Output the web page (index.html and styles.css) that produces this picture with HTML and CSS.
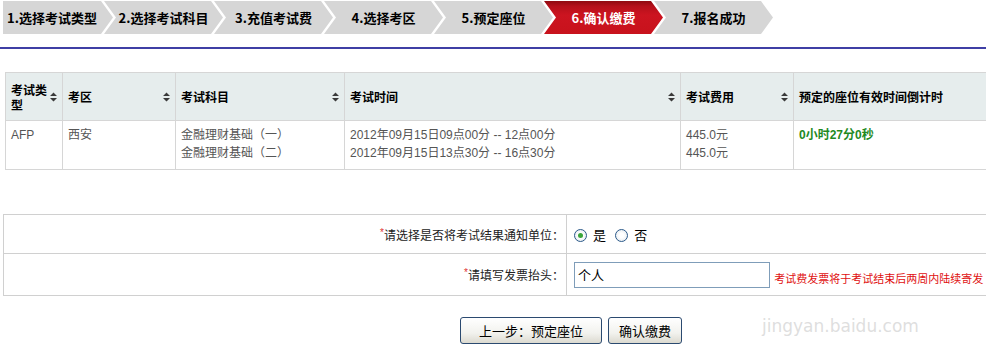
FILE: index.html
```html
<!DOCTYPE html>
<html lang="zh-CN">
<head>
    <meta charset="UTF-8">
    <title>确认缴费</title>
    <link rel="stylesheet" href="styles.css">
</head>
<body>
    <div class="steps">
        <div class="step first">1.选择考试类型</div>
        <div class="step">2.选择考试科目</div>
        <div class="step">3.充值考试费</div>
        <div class="step">4.选择考区</div>
        <div class="step">5.预定座位</div>
        <div class="step active">6.确认缴费</div>
        <div class="step">7.报名成功</div>
    </div>
    <div class="rule"></div>

    <table class="list">
        <thead>
            <tr>
                <th class="c1"><div class="th-in"><span>考试类型</span><svg class="sort" viewBox="0 0 7 10"><path d="M3.5 0.5 L7 4 L0 4 Z M0 6 L7 6 L3.5 9.5 Z"/></svg></div></th>
                <th class="c2"><div class="th-in"><span>考区</span><svg class="sort" viewBox="0 0 7 10"><path d="M3.5 0.5 L7 4 L0 4 Z M0 6 L7 6 L3.5 9.5 Z"/></svg></div></th>
                <th class="c3"><div class="th-in"><span>考试科目</span><svg class="sort" viewBox="0 0 7 10"><path d="M3.5 0.5 L7 4 L0 4 Z M0 6 L7 6 L3.5 9.5 Z"/></svg></div></th>
                <th class="c4"><div class="th-in"><span>考试时间</span><svg class="sort" viewBox="0 0 7 10"><path d="M3.5 0.5 L7 4 L0 4 Z M0 6 L7 6 L3.5 9.5 Z"/></svg></div></th>
                <th class="c5"><div class="th-in"><span>考试费用</span><svg class="sort" viewBox="0 0 7 10"><path d="M3.5 0.5 L7 4 L0 4 Z M0 6 L7 6 L3.5 9.5 Z"/></svg></div></th>
                <th class="c6"><div class="th-in"><span>预定的座位有效时间倒计时</span></div></th>
            </tr>
        </thead>
        <tbody>
            <tr>
                <td>AFP</td>
                <td>西安</td>
                <td>金融理财基础（一）<br>金融理财基础（二）</td>
                <td>2012年09月15日09点00分 -- 12点00分<br>2012年09月15日13点30分 -- 16点30分</td>
                <td>445.0元<br>445.0元</td>
                <td class="countdown">0小时27分0秒</td>
            </tr>
        </tbody>
    </table>

    <table class="form">
        <tr class="r1">
            <td class="label"><em>*</em>请选择是否将考试结果通知单位：</td>
            <td class="field">
                <span class="radio checked"></span><span class="opt">是</span>
                <span class="radio"></span><span class="opt">否</span>
            </td>
        </tr>
        <tr class="r2">
            <td class="label"><em>*</em>请填写发票抬头：</td>
            <td class="field">
                <input type="text" class="title-input" value="个人">
                <span class="note">考试费发票将于考试结束后两周内陆续寄发</span>
            </td>
        </tr>
    </table>

    <div class="actions">
        <button class="btn">上一步：预定座位</button>
        <button class="btn">确认缴费</button>
    </div>

    <div class="watermark">jingyan.baidu.com</div>
</body>
</html>
```

FILE: styles.css
```css
html, body {
    overflow: hidden;
}

body {
    margin: 0;
    width: 986px;
    height: 355px;
    position: relative;
    font-family: "Liberation Sans", "Noto Sans CJK SC", sans-serif;
    font-size: 12px;
    color: #000;
    background: #fff;
}

/* step bar */
.steps {
    display: flex;
    padding: 1px 0 0 3px;
}

.step {
    width: 119px;
    height: 33px;
    margin-left: -9px;
    padding: 0 12px;
    box-sizing: border-box;
    background: #d6d6d6;
    font-family: "Noto Sans CJK SC", sans-serif;
    font-weight: bold;
    font-size: 13px;
    line-height: 33px;
    text-align: center;
    clip-path: polygon(0 0, calc(100% - 12px) 0, 100% 50%, calc(100% - 12px) 100%, 0 100%, 12px 50%);
}

.step.first {
    width: 110px;
    margin-left: 0;
    padding-left: 0;
    clip-path: polygon(0 0, calc(100% - 12px) 0, 100% 50%, calc(100% - 12px) 100%, 0 100%);
}

.step.active {
    color: #fff;
    background: linear-gradient(#8e0a10 0, #b4101a 5px, #cc1420 14px, #c8121c 100%);
}

.rule {
    height: 2px;
    margin-top: 13px;
    background: #3f3fa5;
}

/* list table */
.list {
    margin: 23px 0 0 5px;
    width: 990px;
    border-collapse: collapse;
    table-layout: fixed;
}

.list th, .list td {
    border: 1px solid #d6d6d6;
    padding: 0 5px;
}

.list th {
    height: 47px;
    background: #e6eded;
    font-family: "Noto Sans CJK SC", sans-serif;
    font-weight: bold;
    text-align: left;
    line-height: 15px;
}

.th-in {
    display: flex;
    align-items: center;
    justify-content: space-between;
    gap: 3px;
}

.sort {
    flex: none;
    width: 7px;
    height: 10px;
    fill: #3a3a3a;
}

.c1 { width: 46px; }
.c2 { width: 102px; }
.c3 { width: 158px; }
.c4 { width: 325px; }
.c5 { width: 102px; }

.list td {
    height: 49px;
    vertical-align: top;
    padding-top: 5px;
    color: #555;
    line-height: 18px;
    box-sizing: border-box;
}

.list td.countdown {
    color: #1f8a1f;
    font-weight: bold;
}

/* form table */
.form {
    margin: 44px 0 0 3px;
    width: 995px;
    border-collapse: collapse;
}

.form td {
    border: 1px solid #d0d0d0;
    font-size: 12px;
}

.form tr.r1 td { height: 36px; }
.form tr.r2 td { height: 39px; }

.form .label {
    width: 559px;
    text-align: right;
    padding-right: 2px;
    color: #222;
}

.form .label em {
    font-style: normal;
    color: #e03030;
    font-size: 10px;
    vertical-align: 4px;
}

.form .field {
    padding-left: 7px;
}

.radio {
    display: inline-block;
    width: 11px;
    height: 11px;
    border: 1px solid #2c5a8a;
    border-radius: 50%;
    background: radial-gradient(circle, #fff 30%, #dde4ea 100%);
    vertical-align: -2px;
    position: relative;
}

.radio.checked::after {
    content: "";
    position: absolute;
    left: 3px;
    top: 3px;
    width: 5px;
    height: 5px;
    border-radius: 50%;
    background: #3aa53a;
}

.opt {
    margin: 0 6px;
    font-size: 13px;
    font-family: "Noto Sans CJK SC", sans-serif;
}

.title-input {
    width: 196px;
    height: 26px;
    box-sizing: border-box;
    border: 1px solid #7f9db9;
    padding: 0 3px;
    font-family: "Noto Sans CJK SC", sans-serif;
    font-size: 13px;
    vertical-align: middle;
}

.note {
    color: #e01010;
    font-size: 11px;
    margin-left: 1px;
    vertical-align: -5px;
}

/* buttons */
.actions {
    display: flex;
    gap: 6px;
    margin: 21px 0 0 460px;
}

.btn {
    height: 27px;
    padding: 0 18px;
    border: 1px solid #2b4a70;
    border-radius: 3px;
    background: linear-gradient(#ffffff, #f2f2ee 60%, #dcdad0);
    font-family: "Noto Sans CJK SC", sans-serif;
    font-size: 13px;
    color: #000;
}

.btn + .btn {
    padding: 0 10px;
}

/* watermark overlay */
.watermark {
    position: absolute;
    left: 762px;
    top: 316px;
    font-family: "DejaVu Sans", sans-serif;
    font-size: 17px;
    color: rgba(200, 200, 200, 0.6);
    pointer-events: none;
}
```
